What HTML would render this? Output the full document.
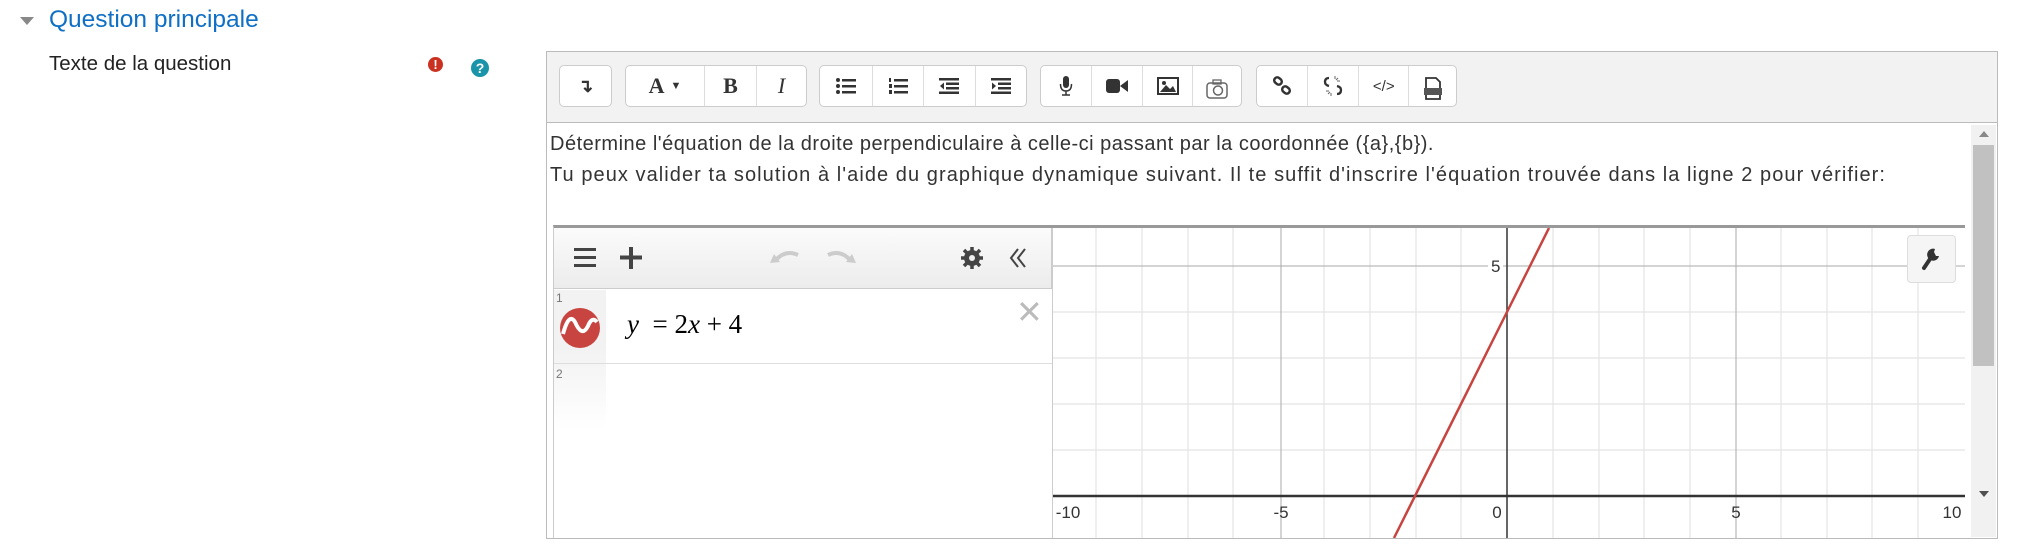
<!DOCTYPE html>
<html><head><meta charset="utf-8"><style>
*{box-sizing:border-box;margin:0;padding:0}
body{width:2017px;height:551px;background:#fff;position:relative;overflow:hidden;font-family:"Liberation Sans",sans-serif;color:#333}
.abs{position:absolute}
.tb{position:absolute;top:65px;height:42px;background:#fff;border:1px solid #ccc;border-radius:5px;display:flex}
.tb div{height:40px;border-left:1px solid #ddd;display:flex;align-items:center;justify-content:center;color:#333}
.tb div:first-child{border-left:none}
</style></head><body>
<div class="abs" style="left:20px;top:17px;width:0;height:0;border-left:7px solid transparent;border-right:7px solid transparent;border-top:8px solid #888"></div>
<div class="abs" style="left:49px;top:6px;font-size:24.5px;color:#0f6fc5">Question principale</div>
<div class="abs" style="left:49px;top:52px;font-size:20.5px;color:#222">Texte de la question</div>
<div class="abs" style="left:428px;top:57px;width:15px;height:15px;border-radius:50%;background:#ca3120;color:#fff;font-size:13px;font-weight:bold;text-align:center;line-height:15px">!</div>
<div class="abs" style="left:471px;top:59px;width:18px;height:18px;border-radius:50%;background:#1a94a8;color:#fff;font-size:14px;font-weight:bold;text-align:center;line-height:18px">?</div>

<div class="abs" style="left:546px;top:51px;width:1452px;height:488px;border:1px solid #bbb;background:#fff"></div>
<div class="abs" style="left:547px;top:52px;width:1450px;height:71px;background:#f2f2f2;border-bottom:1px solid #bbb"></div>

<div class="tb" style="left:559px;width:53px"><div style="width:51px;font-weight:bold;font-size:18px">&#8628;</div></div>
<div class="tb" style="left:625px;width:182px"><div style="width:78px;font-family:'Liberation Serif',serif;font-size:22px;font-weight:bold">A <span style="font-size:11px;margin-left:6px">&#9660;</span></div><div style="width:52px;font-family:'Liberation Serif',serif;font-size:22px;font-weight:bold">B</div><div style="width:50px;font-family:'Liberation Serif',serif;font-size:22px;font-style:italic">I</div></div>
<div class="tb" style="left:819px;width:208px">
<div style="width:52px"><svg width="20" height="16"><g fill="#333"><circle cx="2" cy="2" r="2"/><circle cx="2" cy="8" r="2"/><circle cx="2" cy="14" r="2"/><rect x="6" y="1" width="14" height="2.5"/><rect x="6" y="7" width="14" height="2.5"/><rect x="6" y="13" width="14" height="2.5"/></g></svg></div>
<div style="width:52px"><svg width="20" height="16"><g fill="#333"><rect x="6" y="1" width="14" height="2.5"/><rect x="6" y="7" width="14" height="2.5"/><rect x="6" y="13" width="14" height="2.5"/><rect x="1" y="0" width="2" height="4"/><rect x="1" y="6" width="3" height="4"/><rect x="1" y="12" width="3" height="4"/></g></svg></div>
<div style="width:52px"><svg width="20" height="16"><g fill="#333"><rect x="0" y="0" width="20" height="2.5"/><rect x="7" y="4.5" width="13" height="2.5"/><rect x="7" y="9" width="13" height="2.5"/><rect x="0" y="13.5" width="20" height="2.5"/><path d="M5 4.5 L1 8 L5 11.5Z"/></g></svg></div>
<div style="width:52px"><svg width="20" height="16"><g fill="#333"><rect x="0" y="0" width="20" height="2.5"/><rect x="7" y="4.5" width="13" height="2.5"/><rect x="7" y="9" width="13" height="2.5"/><rect x="0" y="13.5" width="20" height="2.5"/><path d="M1 4.5 L5 8 L1 11.5Z"/></g></svg></div>
</div>
<div class="tb" style="left:1040px;width:202px">
<div style="width:51px"><svg width="14" height="20"><rect x="4" y="0" width="6" height="12" rx="3" fill="#333"/><path d="M1.5 8 Q1.5 15 7 15 Q12.5 15 12.5 8 M7 15 V19 M3 19 H11" stroke="#333" stroke-width="1.5" fill="none"/></svg></div>
<div style="width:51px"><svg width="22" height="16"><rect x="0" y="1" width="14" height="14" rx="3" fill="#333"/><path d="M14 8 L22 2 V14Z" fill="#333"/></svg></div>
<div style="width:51px"><svg width="22" height="18"><rect x="1" y="1" width="20" height="16" fill="none" stroke="#333" stroke-width="2"/><path d="M3 15 L9 8 L13 12 L16 9 L19 15Z" fill="#333"/><circle cx="7" cy="6" r="2" fill="#333"/></svg></div>
<div style="width:49px"><svg width="22" height="20" style="margin-top:6px"><rect x="1" y="4" width="20" height="15" rx="3" fill="none" stroke="#666" stroke-width="1.5"/><rect x="7" y="1" width="8" height="4" fill="none" stroke="#666" stroke-width="1.3"/><circle cx="12" cy="11.5" r="4.5" fill="none" stroke="#666" stroke-width="1.5"/></svg></div>
</div>
<div class="tb" style="left:1256px;width:201px">
<div style="width:51px"><svg width="20" height="20"><g fill="none" stroke="#333" stroke-width="2.5"><rect x="2" y="2" width="8" height="6" rx="3" transform="rotate(40 6 5)"/><rect x="10" y="11" width="8" height="6" rx="3" transform="rotate(40 14 14)"/></g></svg></div>
<div style="width:51px"><svg width="20" height="22"><g fill="none" stroke="#333" stroke-width="2.3"><path d="M6 3 Q2 3 2 7 Q2 10 6 11"/><path d="M14 11 Q18 12 18 15 Q18 19 14 19"/></g><g stroke="#666" stroke-width="1"><path d="M12 1 V4 M15 3 L13 5 M17 6 H14 M3 16 H6 M5 19 L7 17 M8 21 V18"/></g></svg></div>
<div style="width:51px;font-size:15px">&lt;/&gt;</div>
<div style="width:48px"><svg width="20" height="24" style="margin-top:6px"><path d="M3 1 H13 L17 5 V22 H3Z" fill="none" stroke="#333" stroke-width="1.8"/><rect x="1" y="11" width="18" height="7" fill="#555"/></svg></div>
</div>

<div class="abs" style="left:550px;top:129px;font-size:20px;color:#333;line-height:31px;white-space:nowrap"><div style="letter-spacing:0.5px">Détermine l'équation de la droite perpendiculaire à celle-ci passant par la coordonnée ({a},{b}).</div><div style="letter-spacing:1.06px">Tu peux valider ta solution à l'aide du graphique dynamique suivant. Il te suffit d'inscrire l'équation trouvée dans la ligne 2 pour vérifier:</div></div>

<!-- scrollbar -->
<div class="abs" style="left:1971px;top:125px;width:25px;height:412px;background:#f1f1f1"></div>
<div class="abs" style="left:1973px;top:145px;width:21px;height:221px;background:#c1c1c1"></div>
<div class="abs" style="left:1979px;top:131px;width:0;height:0;border-left:5px solid transparent;border-right:5px solid transparent;border-bottom:6px solid #888"></div>
<div class="abs" style="left:1979px;top:491px;width:0;height:0;border-left:5px solid transparent;border-right:5px solid transparent;border-top:6px solid #505050"></div>

<!-- desmos -->
<div class="abs" style="left:553px;top:225px;width:1412px;height:313px;border-top:3px solid #999;border-left:1px solid #ccc"></div>
<svg class="abs" style="left:1052px;top:228px" width="913" height="310">
 <g stroke="#e4e4e4" stroke-width="1.2">
  <line x1="44" y1="0" x2="44" y2="310"/><line x1="90" y1="0" x2="90" y2="310"/><line x1="136" y1="0" x2="136" y2="310"/><line x1="181" y1="0" x2="181" y2="310"/>
  <line x1="272" y1="0" x2="272" y2="310"/><line x1="318" y1="0" x2="318" y2="310"/><line x1="364" y1="0" x2="364" y2="310"/><line x1="409" y1="0" x2="409" y2="310"/>
  <line x1="501" y1="0" x2="501" y2="310"/><line x1="547" y1="0" x2="547" y2="310"/><line x1="592" y1="0" x2="592" y2="310"/><line x1="638" y1="0" x2="638" y2="310"/>
  <line x1="729" y1="0" x2="729" y2="310"/><line x1="775" y1="0" x2="775" y2="310"/><line x1="820" y1="0" x2="820" y2="310"/><line x1="866" y1="0" x2="866" y2="310"/>
  <line x1="0" y1="84" x2="913" y2="84"/><line x1="0" y1="130" x2="913" y2="130"/><line x1="0" y1="176" x2="913" y2="176"/><line x1="0" y1="222" x2="913" y2="222"/>
 </g>
 <g stroke="#aaa" stroke-width="1">
  <line x1="229" y1="0" x2="229" y2="310"/><line x1="684" y1="0" x2="684" y2="310"/>
  <line x1="0" y1="38" x2="913" y2="38"/>
 </g>
 <line x1="0" y1="268" x2="913" y2="268" stroke="#333" stroke-width="2.5"/>
 <line x1="455" y1="0" x2="455" y2="310" stroke="#333" stroke-width="1.5"/>
 <line x1="342" y1="310" x2="497" y2="0" stroke="#c74440" stroke-width="2.5"/>
 <g font-family="Liberation Sans,sans-serif" font-size="17" fill="#333">
  <rect x="436" y="28" width="15" height="20" fill="#fff"/>
  <text x="439" y="44">5</text>
  <text x="16" y="290" text-anchor="middle">-10</text>
  <text x="229" y="290" text-anchor="middle">-5</text>
  <text x="445" y="290" text-anchor="middle">0</text>
  <text x="684" y="290" text-anchor="middle">5</text>
  <text x="900" y="290" text-anchor="middle">10</text>
 </g>
</svg>
<div class="abs" style="left:1907px;top:235px;width:49px;height:48px;background:#f5f5f5;border:1px solid #ddd;border-radius:4px"></div>
<svg class="abs" style="left:1919px;top:246px" width="24" height="26"><path d="M16 3 A6 6 0 1 0 20 10 L17 10 L15 6 Z" fill="#333"/><path d="M13 10 L5 22" stroke="#333" stroke-width="4" stroke-linecap="round"/></svg>

<!-- left panel -->
<div class="abs" style="left:554px;top:228px;width:498px;height:61px;background:linear-gradient(#fbfbfb,#ececec);border-right:1px solid #ccc;border-bottom:1px solid #ccc"></div>
<svg class="abs" style="left:570px;top:245px" width="480" height="26">
 <g fill="#444"><rect x="4" y="3" width="22" height="3"/><rect x="4" y="11" width="22" height="3"/><rect x="4" y="19" width="22" height="3"/>
 <rect x="50" y="10.5" width="22" height="4"/><rect x="59" y="2" width="4" height="22"/></g>
 <path d="M205 16 Q215 4 228 10" stroke="#ccc" stroke-width="4" fill="none"/><path d="M200 18 L204 9 L210 17Z" fill="#ccc"/>
 <path d="M258 10 Q271 4 281 16" stroke="#ccc" stroke-width="4" fill="none"/><path d="M286 18 L282 9 L276 17Z" fill="#ccc"/>
 <circle cx="402" cy="13" r="8" fill="#444"/>
 <g stroke="#444" stroke-width="3.5"><line x1="402" y1="2" x2="402" y2="24"/><line x1="391" y1="13" x2="413" y2="13"/><line x1="394" y1="5" x2="410" y2="21"/><line x1="410" y1="5" x2="394" y2="21"/></g>
 <circle cx="402" cy="13" r="3" fill="#eee"/>
 <path d="M448 4 L441 13 L448 22 M455 4 L448 13 L455 22" stroke="#444" stroke-width="2" fill="none"/>
</svg>
<div class="abs" style="left:554px;top:290px;width:52px;height:140px;background:linear-gradient(#f2f2f2 40%,#fff)"></div>
<div class="abs" style="left:556px;top:291px;font-size:12px;color:#777">1</div>
<div class="abs" style="left:556px;top:367px;font-size:12px;color:#777">2</div>
<div class="abs" style="left:554px;top:363px;width:498px;height:1px;background:#ddd"></div>
<div class="abs" style="left:1052px;top:228px;width:1px;height:310px;background:#ccc"></div>
<svg class="abs" style="left:560px;top:308px" width="40" height="40"><circle cx="20" cy="20" r="20" fill="#c74440"/><path d="M3 26 Q9 4 15 14 Q22 30 28 18 Q32 8 37 14" stroke="#fff" stroke-width="4" fill="none"/></svg>
<div class="abs" style="left:627px;top:309px;font-family:'Liberation Serif',serif;font-size:27px;color:#000"><i>y</i> &nbsp;= 2<i>x</i> + 4</div>
<div class="abs" style="left:1016px;top:296px;font-size:32px;color:#bbb;line-height:32px">&#10005;</div>
</body></html>
